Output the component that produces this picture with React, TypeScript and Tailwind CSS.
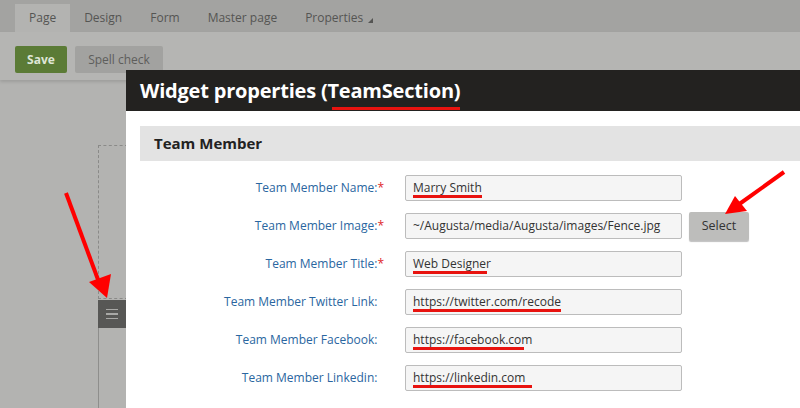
import React from "react";

const rows = [
  { label: "Team Member Name:", req: true, value: "Marry Smith", ul: 69 },
  { label: "Team Member Image:", req: true, value: "~/Augusta/media/Augusta/images/Fence.jpg", ul: 0, select: true },
  { label: "Team Member Title:", req: true, value: "Web Designer", ul: 74 },
  { label: "Team Member Twitter Link:", req: false, value: "https://twitter.com/recode", ul: 148 },
  { label: "Team Member Facebook:", req: false, value: "https://facebook.com", ul: 111 },
  { label: "Team Member Linkedin:", req: false, value: "https://linkedin.com", ul: 119 },
];

export default function App() {
  return (
    <div
      className="relative w-[800px] h-[408px] overflow-hidden bg-[#b3b3b1]"
      style={{ fontFamily: '"Open Sans", "Noto Sans", sans-serif' }}
    >
      {/* Tabs bar */}
      <div className="h-[32px] bg-[#a3a3a1] flex items-end pl-[15px] text-[12px] text-[#555553]">
        <div className="h-[28px] px-[14px] flex items-center bg-[#b3b3b1]">Page</div>
        <div className="h-[28px] px-[14px] flex items-center">Design</div>
        <div className="h-[28px] px-[14px] flex items-center">Form</div>
        <div className="h-[28px] px-[14px] flex items-center">Master page</div>
        <div className="h-[28px] px-[14px] flex items-center gap-[5px]">
          Properties
          <span className="inline-block w-0 h-0 border-l-[5px] border-l-transparent border-b-[5px] border-b-[#555553] mt-[4px]" />
        </div>
      </div>
      {/* Toolbar */}
      <div className="h-[48px] bg-[#b5b5b3] shadow-[0_2px_3px_rgba(0,0,0,0.12)] flex items-start pt-[14px] pl-[15px] gap-[8px] text-[12px]">
        <div className="w-[52px] h-[27px] rounded-[2px] bg-[#5b7b36] text-[#dfe6d6] font-bold flex items-center justify-center">Save</div>
        <div className="w-[88px] h-[27px] rounded-[2px] bg-[#a2a2a0] text-[#5e5e5c] flex items-center justify-center">Spell check</div>
      </div>

      {/* left canvas widget */}
      <div className="absolute left-[98px] top-[145px] w-[30px] h-[154px] border-l border-t border-b border-dashed border-[#8a8a88]" />
      <div className="absolute left-[98px] top-[300px] w-[28px] h-[28px] bg-[#575755] flex flex-col items-center justify-center gap-[3px]">
        <div className="w-[12px] h-[1.5px] bg-[#a8a8a6]" />
        <div className="w-[12px] h-[1.5px] bg-[#a8a8a6]" />
        <div className="w-[12px] h-[1.5px] bg-[#a8a8a6]" />
      </div>
      <div className="absolute left-[98px] top-[328px] w-px h-[80px] bg-[#8e8e8c]" />

      {/* Dialog */}
      <div className="absolute left-[126px] top-[70px] right-0 bottom-0 bg-white flex flex-col">
        <div className="relative h-[41px] bg-[#232220] flex items-center pl-[14px] shrink-0">
          <span className="text-white font-bold text-[20px] leading-none tracking-[-0.2px]">
            Widget properties (TeamSection)
          </span>
          <div className="absolute left-[206px] top-[37px] w-[128px] h-[3px] bg-[#e8130f]" />
        </div>
        <div className="pl-[14px] pt-[15px]">
          <div className="h-[35px] bg-[#e3e3e3] flex items-center pl-[14px] text-[15px] font-bold text-[#222]">Team Member</div>
          <div className="flex flex-col gap-[12px] mt-[14px]">
            {rows.map((r) => (
              <div key={r.label} className="flex items-center h-[26px]">
                <div className="w-[244px] text-right text-[12px] font-medium text-[#2a66a0] whitespace-nowrap">
                  {r.label}
                  {r.req && <span className="text-[#e0262a]">*</span>}
                  {!r.req && <span className="invisible">*</span>}
                </div>
                <div className="ml-[21px] relative w-[277px] h-[26px] bg-[#f5f5f5] border-[1.5px] border-[#bcbcbc] rounded-[2px] flex items-center pl-[7px] text-[12px] text-[#333] whitespace-nowrap">
                  {r.value}
                  {r.ul > 0 && (
                    <div className="absolute left-[7px] bottom-[2px] h-[3px] bg-[#e8130f]" style={{ width: r.ul }} />
                  )}
                </div>
                {r.select && (
                  <div className="ml-[7px] w-[60px] h-[28px] bg-[#bdbdbb] rounded-[2px] shadow-[0_2px_1px_rgba(0,0,0,0.25)] flex items-center justify-center text-[12.5px] text-[#333]">
                    Select
                  </div>
                )}
              </div>
            ))}
          </div>
        </div>
      </div>

      {/* Red arrows */}
      <svg className="absolute left-0 top-0 pointer-events-none" width="800" height="408">
        <line x1="66" y1="193" x2="100" y2="285" stroke="#f00" strokeWidth="4" />
        <polygon points="107,298 89,282 111,274" fill="#f00" />
        <line x1="784" y1="172" x2="738" y2="205" stroke="#f00" strokeWidth="4" />
        <polygon points="725,214 735,196 747,211" fill="#f00" />
      </svg>
    </div>
  );
}
